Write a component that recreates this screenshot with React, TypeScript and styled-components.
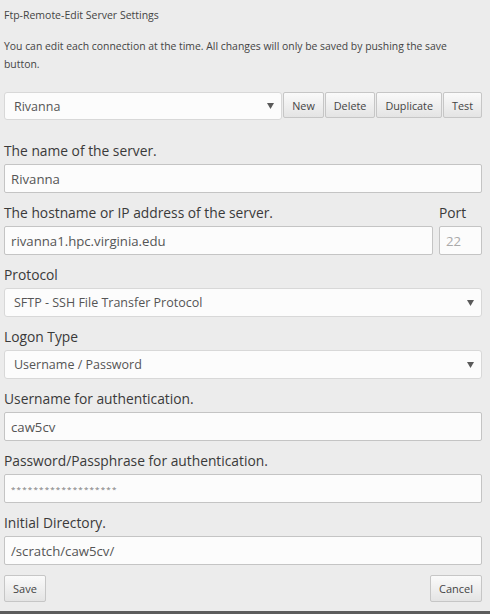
import React from 'react'
import styled, { createGlobalStyle } from 'styled-components'

const GlobalStyle = createGlobalStyle`
  html, body {
    margin: 0;
    padding: 0;
    background: #ececec;
  }
  * {
    box-sizing: border-box;
  }
`

const Page = styled.div`
  height: 614px;
  padding: 7px 8px 0 4px;
  font-family: 'Open Sans', 'Liberation Sans', sans-serif;
  color: #333;
  border-bottom: 3px solid #5c5c5c;
  background: #ececec;
`

const Heading = styled.div`
  font-size: 10.5px;
  line-height: 16px;
  color: #444;
`

const Intro = styled.p`
  margin: 14px 0 0 0;
  font-size: 10.4px;
  line-height: 18px;
  color: #444;
`

const Toolbar = styled.div`
  display: flex;
  align-items: flex-start;
  margin-top: 19px;
  gap: 1px;
`

const SelectBox = styled.div<{ $small?: boolean }>`
  display: flex;
  align-items: center;
  flex: 1;
  height: ${(p) => (p.$small ? '28px' : '29px')};
  padding: 0 7px 0 9px;
  background: #fcfcfc;
  border: 1px solid #d8d8d8;
  border-radius: 3px;
  font-size: 12.5px;
  color: #555;
`

const SelectText = styled.span`
  flex: 1;
`

const Arrow = () => (
  <svg width="7" height="6" viewBox="0 0 7 6">
    <path d="M0 0 H7 L3.5 6 Z" fill="#5a5a5a" />
  </svg>
)

const Button = styled.button`
  height: 26px;
  padding: 0 8px;
  margin: 0;
  font-family: inherit;
  font-size: 10.8px;
  color: #444;
  background: linear-gradient(#fafafa, #e4e4e4);
  border: 1px solid #c6c6c6;
  border-radius: 2px;
  cursor: pointer;
`

const Field = styled.div`
  margin-bottom: 10px;
`

const Label = styled.div`
  font-size: 13.8px;
  line-height: 20px;
  margin-bottom: 3px;
  color: #3a3a3a;
`

const Input = styled.input<{ $dim?: boolean }>`
  display: block;
  width: 100%;
  height: 29px;
  padding: 0 6px;
  font-family: inherit;
  font-size: 13.2px;
  color: ${(p) => (p.$dim ? '#aaa' : '#555')};
  background: #fcfcfc;
  border: 1px solid #c4c4c4;
  border-radius: 2px;
  outline: none;
`

const Stars = styled(Input)`
  font-size: 8px;
  letter-spacing: 1.2px;
  color: #777;
`

const HostRow = styled.div`
  display: grid;
  grid-template-columns: 1fr 43px;
  gap: 6px;
`

const Section = styled.div`
  margin-top: 21px;
`

const Footer = styled.div`
  display: flex;
  justify-content: space-between;
`

const FooterButton = styled(Button)`
  height: 27px;
  padding: 0 8px;
  font-size: 11px;
`

export default function App() {
  return (
    <Page>
      <GlobalStyle />
      <Heading>Ftp-Remote-Edit Server Settings</Heading>
      <Intro>
        You can edit each connection at the time. All changes will only be saved by pushing the save
        button.
      </Intro>

      <Toolbar>
        <SelectBox $small>
          <SelectText>Rivanna</SelectText>
          <Arrow />
        </SelectBox>
        <Button>New</Button>
        <Button>Delete</Button>
        <Button>Duplicate</Button>
        <Button>Test</Button>
      </Toolbar>

      <Section>
        <Field>
          <Label>The name of the server.</Label>
          <Input readOnly value="Rivanna" />
        </Field>

        <HostRow>
          <Field>
            <Label>The hostname or IP address of the server.</Label>
            <Input readOnly value="rivanna1.hpc.virginia.edu" />
          </Field>
          <Field>
            <Label>Port</Label>
            <Input readOnly $dim value="22" />
          </Field>
        </HostRow>

        <Field>
          <Label>Protocol</Label>
          <SelectBox>
            <SelectText>SFTP - SSH File Transfer Protocol</SelectText>
            <Arrow />
          </SelectBox>
        </Field>

        <Field>
          <Label>Logon Type</Label>
          <SelectBox>
            <SelectText>Username / Password</SelectText>
            <Arrow />
          </SelectBox>
        </Field>

        <Field>
          <Label>Username for authentication.</Label>
          <Input readOnly value="caw5cv" />
        </Field>

        <Field>
          <Label>Password/Passphrase for authentication.</Label>
          <Stars readOnly value="*******************" />
        </Field>

        <Field>
          <Label>Initial Directory.</Label>
          <Input readOnly value="/scratch/caw5cv/" />
        </Field>
      </Section>

      <Footer>
        <FooterButton>Save</FooterButton>
        <FooterButton>Cancel</FooterButton>
      </Footer>
    </Page>
  )
}
